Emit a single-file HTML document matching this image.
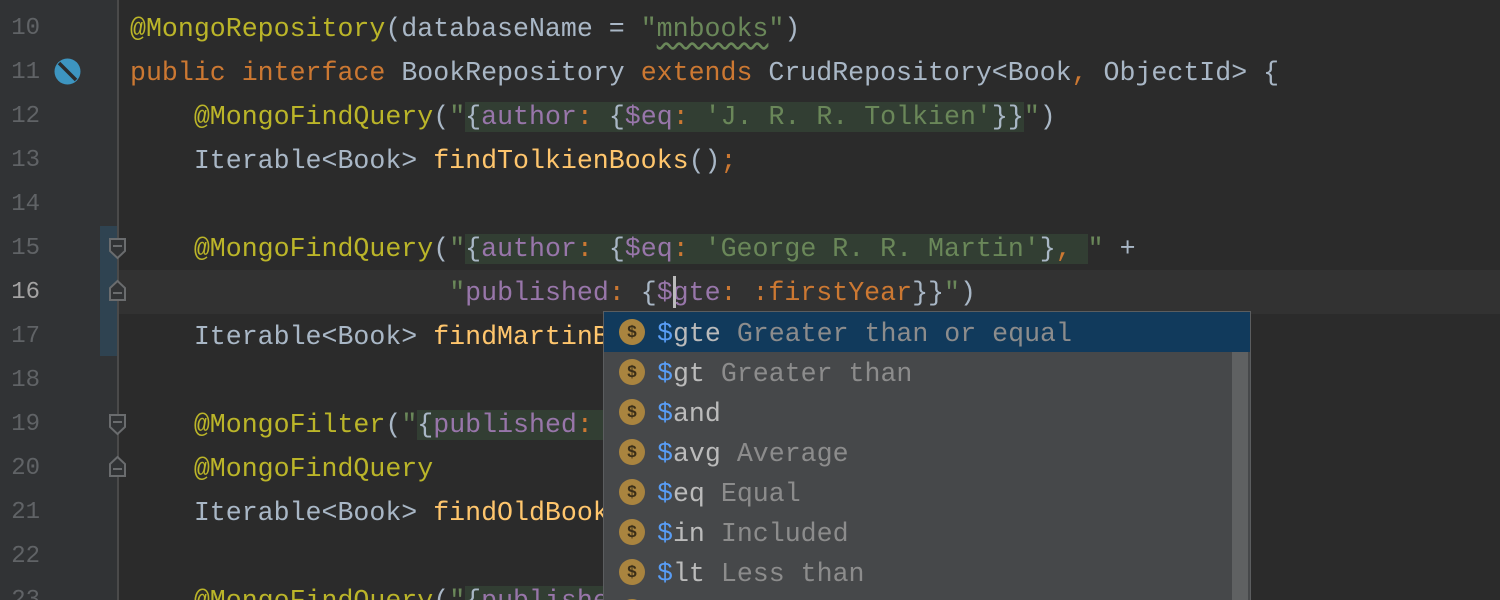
<!DOCTYPE html>
<html style="width:1500px;height:600px;overflow:hidden"><head><meta charset="utf-8"><style>
body{margin:0;width:1500px;height:600px;overflow:hidden;background:#2b2b2b;font-family:"Liberation Mono",monospace;font-size:26.6px;position:relative}
.g{position:absolute;left:0;top:0;width:117px;height:600px;background:#313335}
.sep{position:absolute;left:117px;top:0;width:2px;height:600px;background:#4a4a4a}
.bar{position:absolute;left:100px;top:226px;width:17px;height:130px;background:#2f4351}
.cur{position:absolute;left:119px;top:270px;width:1381px;height:44px;background:#323232}
.ln{position:absolute;left:0;width:40px;text-align:right;color:#606366;height:44px;line-height:46px;font-size:24px;overflow:hidden}
.l{position:absolute;left:130px;height:44px;line-height:46px;white-space:pre;color:#a9b7c6;overflow:hidden}
.a{color:#bbb529}.k{color:#cc7832}.s{color:#6a8759}.m{color:#ffc66d}.p{color:#9876aa}.o{color:#cc7832}
.h{background:#323e33}
.pop{position:absolute;left:603px;top:311px;width:646px;height:288px;background:#46484a;border:1px solid #5b5d5f;border-bottom:none;overflow:hidden}
.it{height:40px;line-height:44px;position:relative;padding-left:53px;white-space:pre;color:#bbbbbb}
.it.sel{background:#113a5c}
.it .d{color:#8c8c8c}.it .b{color:#589df6}
.ic{position:absolute;left:15px;top:7px;width:26px;height:26px;border-radius:50%;background:#a9843f;color:#3a2e18;font-size:17px;line-height:26px;text-align:center;font-family:"Liberation Sans",sans-serif;font-weight:bold}
.sb{position:absolute;left:628px;top:2px;width:16px;height:300px;background:#5f6162}
.sb2{position:absolute;left:628px;top:2px;width:16px;height:38px;background:#3d5872}
</style></head><body>
<div class="g"></div><div class="bar"></div><div class="cur"></div><div class="sep"></div>
<div class="ln" style="top:6px">10</div>
<div class="ln" style="top:50px">11</div>
<div class="ln" style="top:94px">12</div>
<div class="ln" style="top:138px">13</div>
<div class="ln" style="top:182px">14</div>
<div class="ln" style="top:226px">15</div>
<div class="ln" style="top:270px;color:#a4a3a3">16</div>
<div class="ln" style="top:314px">17</div>
<div class="ln" style="top:358px">18</div>
<div class="ln" style="top:402px">19</div>
<div class="ln" style="top:446px">20</div>
<div class="ln" style="top:490px">21</div>
<div class="ln" style="top:534px">22</div>
<div class="ln" style="top:578px;height:22px">23</div>
<svg style="position:absolute;left:54px;top:58px" width="27" height="27"><circle cx="13.5" cy="13.5" r="13" fill="#3d95c0"/><line x1="5" y1="5" x2="22" y2="22" stroke="#2b2b2b" stroke-width="3.5"/></svg>
<svg style="position:absolute;left:0;top:0" width="130" height="600">
<g fill="#313335" stroke="#6a6c6e" stroke-width="2">
<path d="M110 239h15v12l-7.5 7l-7.5-7z"/><path d="M110 300h15v-12l-7.5-7l-7.5 7z"/>
<path d="M110 415h15v12l-7.5 7l-7.5-7z"/><path d="M110 476h15v-12l-7.5-7l-7.5 7z"/></g>
<g stroke="#6a6c6e" stroke-width="2"><line x1="113" y1="246" x2="122" y2="246"/><line x1="113" y1="293" x2="122" y2="293"/><line x1="113" y1="422" x2="122" y2="422"/><line x1="113" y1="469" x2="122" y2="469"/></g>
</svg>
<div class="l" style="top:6px"><span class="a">@MongoRepository</span>(databaseName = <span class="s">"<span style="text-decoration:underline wavy #6a8759;text-underline-offset:6px">mnbooks</span>"</span>)</div>
<div class="l" style="top:50px"><span class="k">public interface </span>BookRepository <span class="k">extends </span>CrudRepository&lt;Book<span class="k">,</span> ObjectId&gt; {</div>
<div class="l" style="top:94px">    <span class="a">@MongoFindQuery</span>(<span class="s">"</span><span class="h">{<span class="p">author</span><span class="o">:</span> {<span class="p">$eq</span><span class="o">:</span> <span class="s">'J. R. R. Tolkien'</span>}}</span><span class="s">"</span>)</div>
<div class="l" style="top:138px">    Iterable&lt;Book&gt; <span class="m">findTolkienBooks</span>()<span class="k">;</span></div>
<div class="l" style="top:226px">    <span class="a">@MongoFindQuery</span>(<span class="s">"</span><span class="h">{<span class="p">author</span><span class="o">:</span> {<span class="p">$eq</span><span class="o">:</span> <span class="s">'George R. R. Martin'</span>}<span class="o">,</span> </span><span class="s">"</span> +</div>
<div class="l" style="top:270px">                    <span class="s">"</span><span class="p">published</span><span class="o">:</span> {<span class="p">$gte</span><span class="o">:</span> <span class="o">:firstYear</span>}}<span class="s">"</span>)</div>
<div style="position:absolute;left:673px;top:276px;width:3px;height:32px;background:#bbbbbb"></div>
<div class="l" style="top:314px">    Iterable&lt;Book&gt; <span class="m">findMartinBooks</span>(<span class="k">int </span>firstYear)<span class="k">;</span></div>
<div class="l" style="top:402px">    <span class="a">@MongoFilter</span>(<span class="s">"</span><span class="h">{<span class="p">published</span><span class="o">:</span> {<span class="p">$lt</span><span class="o">:</span> 1950}}</span><span class="s">"</span>)</div>
<div class="l" style="top:446px">    <span class="a">@MongoFindQuery</span></div>
<div class="l" style="top:490px">    Iterable&lt;Book&gt; <span class="m">findOldBooks</span>()<span class="k">;</span></div>
<div class="l" style="top:578px;height:22px">    <span class="a">@MongoFindQuery</span>(<span class="s">"</span><span class="h">{<span class="p">published</span><span class="o">:</span> {<span class="p">$lt</span><span class="o">:</span> 1900}}</span><span class="s">"</span>)</div>
<div class="pop">
<div class="sb"></div><div class="sb2"></div>
<div class="it sel"><span class="ic">$</span><span class="b">$</span>gte <span class="d">Greater than or equal</span></div>
<div class="it"><span class="ic">$</span><span class="b">$</span>gt <span class="d">Greater than</span></div>
<div class="it"><span class="ic">$</span><span class="b">$</span>and</div>
<div class="it"><span class="ic">$</span><span class="b">$</span>avg <span class="d">Average</span></div>
<div class="it"><span class="ic">$</span><span class="b">$</span>eq <span class="d">Equal</span></div>
<div class="it"><span class="ic">$</span><span class="b">$</span>in <span class="d">Included</span></div>
<div class="it"><span class="ic">$</span><span class="b">$</span>lt <span class="d">Less than</span></div>
<div class="it"><span class="ic">$</span><span class="b">$</span>lte <span class="d">Less than or equal</span></div>
</div>
</body></html>
